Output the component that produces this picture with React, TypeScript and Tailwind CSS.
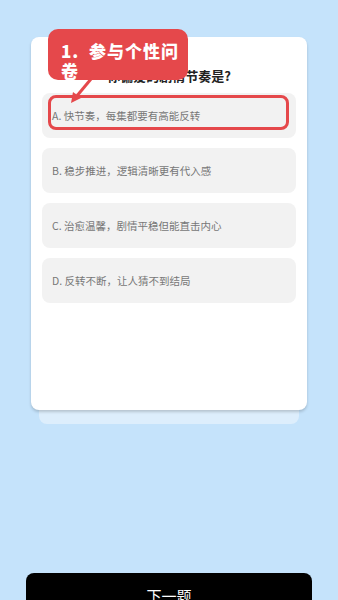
import React from "react";

const options = [
  "A. 快节奏，每集都要有高能反转",
  "B. 稳步推进，逻辑清晰更有代入感",
  "C. 治愈温馨，剧情平稳但能直击内心",
  "D. 反转不断，让人猜不到结局",
];

const font = { fontFamily: '"Noto Sans CJK SC", "Noto Sans", sans-serif' };

export default function App() {
  return (
    <div
      className="relative h-[600px] w-[338px] overflow-hidden bg-[#c5e3fb]"
      style={font}
    >
      <div className="flex flex-col pt-[37px]">
        {/* card */}
        <div className="relative z-10 mx-[31px] h-[373px] rounded-lg bg-white px-[11px] shadow-[0_2px_3px_rgba(0,0,0,0.18)]">
          <div className="flex h-[56px] items-end justify-center pb-[8px] text-[13px] font-bold text-[#222]">
            你偏爱的剧情节奏是?
          </div>
          <div className="flex flex-col gap-[10px]">
            {options.map((o) => (
              <div
                key={o}
                className="flex h-[45px] items-center rounded-lg bg-[#f2f2f2] px-[10px] text-[10.5px] text-[#777]"
              >
                {o}
              </div>
            ))}
          </div>
        </div>
        <div className="mx-[39px] h-[14px] rounded-b-lg bg-[#ddeefc]" />

        <button className="mx-[26px] mt-[149px] flex h-[48px] items-start justify-center rounded-lg bg-black pt-[12px] text-[15px] text-white">
          下一题
        </button>
      </div>

      {/* highlight on option A */}
      <div className="absolute left-[48px] top-[95px] z-20 h-[35px] w-[241px] rounded-lg border-[3px] border-[#e5484b]" />

      {/* callout */}
      <div className="absolute left-[48px] top-[29px] z-20 h-[51px] w-[140px] whitespace-pre rounded-[10px] bg-[#e5484b] pl-[13px] pt-[12px] text-[17px] font-black leading-[20px] tracking-[1px] text-white">
        {"1.  参与个性问\n卷"}
      </div>
      <svg
        className="absolute left-0 top-0 z-20"
        width="338"
        height="120"
        viewBox="0 0 338 120"
      >
        <line x1="91" y1="79" x2="76" y2="97" stroke="#e5484b" strokeWidth="3" />
        <polygon points="71,103 73,92 81,98" fill="#e5484b" />
      </svg>
    </div>
  );
}
